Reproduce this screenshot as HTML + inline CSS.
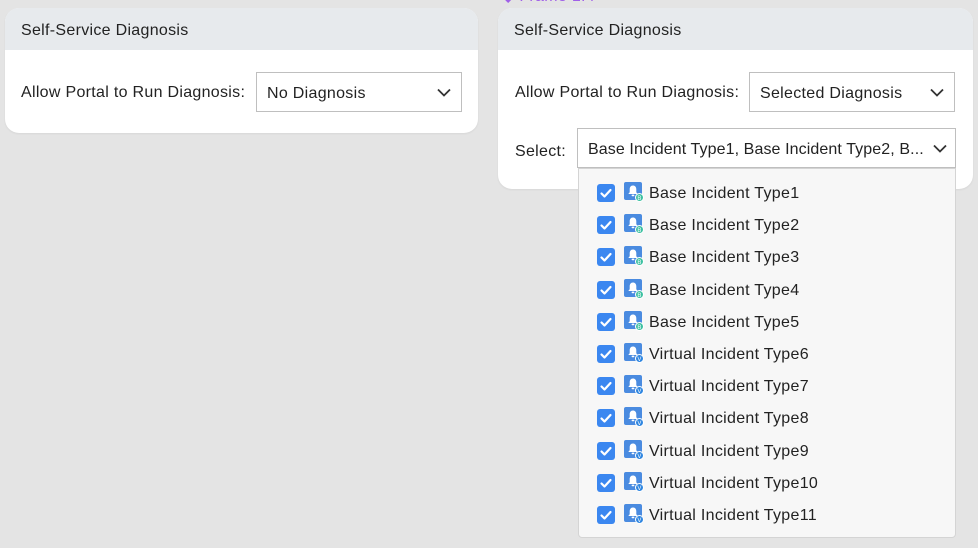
<!DOCTYPE html>
<html><head><style>
*{box-sizing:border-box;margin:0;padding:0}
body{width:978px;height:548px;background:#e4e4e4;font-family:"Liberation Sans","DejaVu Sans",sans-serif;position:relative;overflow:hidden;color:#222;letter-spacing:0.3px}
.card{position:absolute;background:#fff;border-radius:14px;overflow:hidden;box-shadow:0 1px 2px rgba(0,0,0,.06)}
.hd{height:42px;background:#e7eaed;font-size:16px;padding:14px 0 0 16px;color:#222}
.lbl{position:absolute;font-size:16px}
.sel{position:absolute;border:1px solid #bfbfbf;background:#fff;font-size:16px;padding:12px 0 0 10px;height:40px;white-space:nowrap}
.chev{position:absolute;right:10px;top:15px;width:14px;height:9px}
.dd{position:absolute;left:578px;top:168px;width:378px;height:370px;background:#f7f7f7;border:1px solid #d4d4d4;border-radius:0 0 4px 4px}
.row{position:absolute;left:18px;height:20px;font-size:16px}
.cb{position:absolute;left:0;top:-1px;width:18px;height:18px;background:#3b87f0;border-radius:3px}
.ic{position:absolute;left:27px;top:-3px;width:20px;height:20px}
.tx{position:absolute;left:52px;top:0px;white-space:nowrap;color:#222}
</style></head><body>
<div style="position:absolute;left:502px;top:-14px;color:#a060e8;font-size:16px">◆ Frame 1.4</div>

<div class="card" style="left:5px;top:8px;width:473px;height:125px">
<div class="hd">Self-Service Diagnosis</div>
</div>
<div class="lbl" style="left:21px;top:84px">Allow Portal to Run Diagnosis:</div>
<div class="sel" style="left:256px;top:72px;width:206px">No Diagnosis<svg class="chev" viewBox="0 0 14 9"><path d="M1 1.5l6 6 6-6" stroke="#333" stroke-width="1.8" fill="none"/></svg></div>

<div class="card" style="left:498px;top:8px;width:475px;height:181px">
<div class="hd">Self-Service Diagnosis</div>
</div>
<div class="lbl" style="left:515px;top:84px">Allow Portal to Run Diagnosis:</div>
<div class="sel" style="left:749px;top:72px;width:206px">Selected Diagnosis<svg class="chev" viewBox="0 0 14 9"><path d="M1 1.5l6 6 6-6" stroke="#333" stroke-width="1.8" fill="none"/></svg></div>
<div class="lbl" style="left:515px;top:143px">Select:</div>
<div class="sel" style="left:577px;top:128px;width:379px;letter-spacing:0.1px">Base Incident Type1, Base Incident Type2, B...<svg class="chev" style="right:8px" viewBox="0 0 14 9"><path d="M1 1.5l6 6 6-6" stroke="#333" stroke-width="1.8" fill="none"/></svg></div>

<div class="dd">
<div id="rows"></div>
</div>
<script>
var h='';var names=['Base Incident Type1','Base Incident Type2','Base Incident Type3','Base Incident Type4','Base Incident Type5','Virtual Incident Type6','Virtual Incident Type7','Virtual Incident Type8','Virtual Incident Type9','Virtual Incident Type10','Virtual Incident Type11'];
for(var i=0;i<11;i++){var b=i<5;var y=16+i*32.2;
h+='<div class="row" style="top:'+y+'px"><div class="cb"><svg width="18" height="18" viewBox="0 0 18 18"><path d="M4.5 9.5l3 3 6-6.5" stroke="#fff" stroke-width="2.2" fill="none" stroke-linecap="round" stroke-linejoin="round"/></svg></div>'+
'<svg class="ic" viewBox="0 0 20 20"><rect x="0" y="0" width="18" height="18" rx="2" fill="#4a8be0"/><path d="M9 3.5c-2.2 0-3.3 1.7-3.3 3.8v3L4.3 12h9.4l-1.4-1.7v-3C12.3 5.2 11.2 3.5 9 3.5z" fill="#fff"/><rect x="7.6" y="12.6" width="2.8" height="1.6" rx=".8" fill="#fff"/><circle cx="15.5" cy="15.5" r="4" fill="'+(b?'#3cc0a0':'#2f86e0')+'" stroke="#fff" stroke-width="1"/><text x="15.5" y="18" font-size="6" fill="#fff" text-anchor="middle" font-family="Liberation Sans">'+(b?'B':'V')+'</text></svg>'+
'<div class="tx">'+names[i]+'</div></div>';}
document.getElementById('rows').innerHTML=h;
</script>
</body></html>
